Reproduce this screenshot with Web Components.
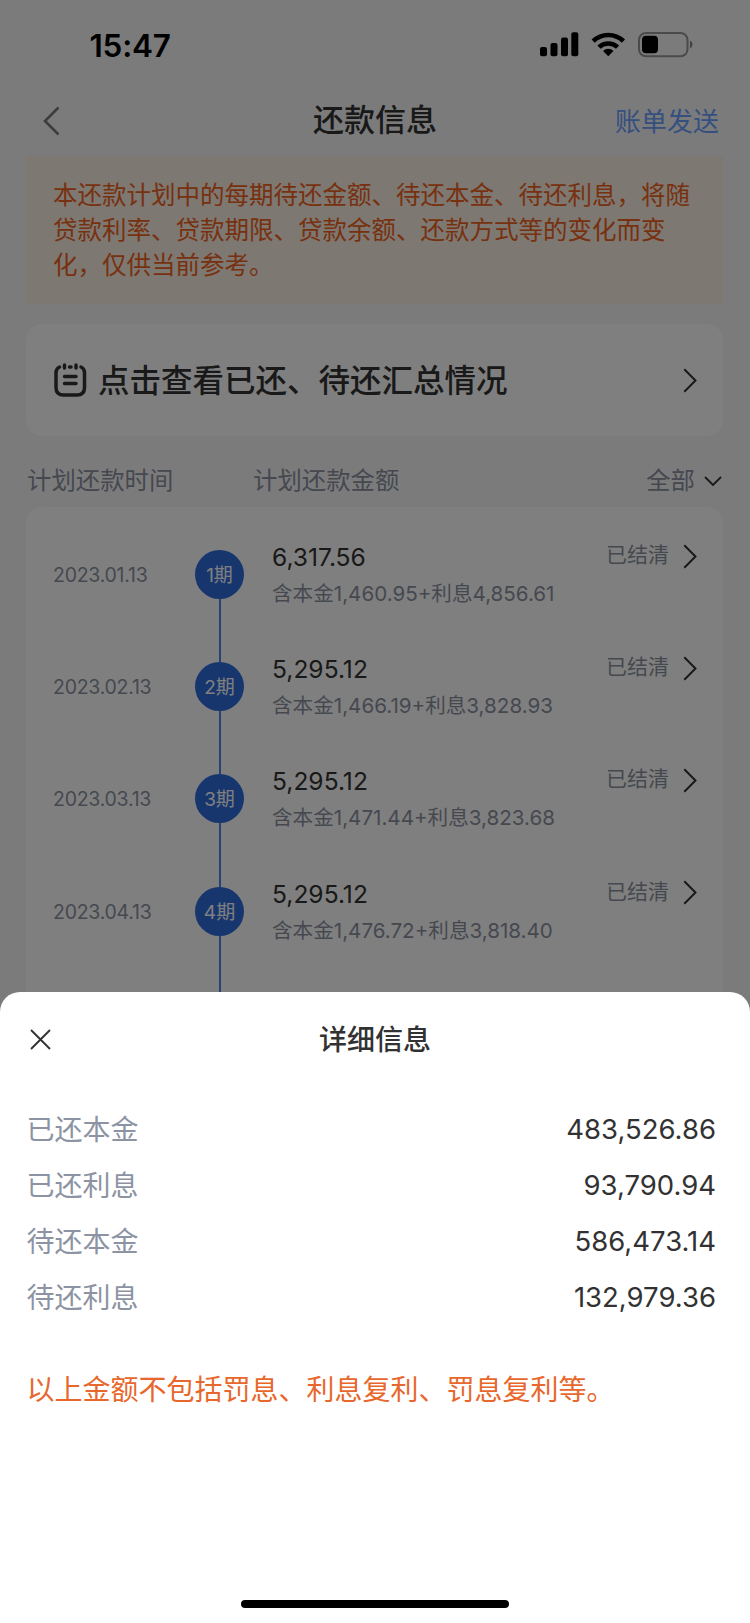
<!DOCTYPE html>
<html lang="zh-CN">
<head>
<meta charset="utf-8">
<title>还款信息</title>
<style>
html, body {
    margin: 0;
    height: 1623px;
    overflow: hidden;
    font-family: Inter, "Noto Sans CJK SC", sans-serif;
    color: #323233;
}
</style>
</head>
<body>
<repayment-app></repayment-app>

<script>
'use strict'

const INSTALLMENTS = [
    {date: '2023.01.13', amount: '6,317.56', principal: '1,460.95', interest: '4,856.61'},
    {date: '2023.02.13', amount: '5,295.12', principal: '1,466.19', interest: '3,828.93'},
    {date: '2023.03.13', amount: '5,295.12', principal: '1,471.44', interest: '3,823.68'},
    {date: '2023.04.13', amount: '5,295.12', principal: '1,476.72', interest: '3,818.40'}
];

class StatusBar extends HTMLElement {

    constructor() {
        super();

        this.attachShadow({mode: 'open'}).innerHTML = `
            <style>
            :host {
                display: flex;
                justify-content: space-between;
                align-items: center;
                height: 90px;
                padding: 0 56px 0 89.5px;
                box-sizing: border-box;
                color: #000;
            }
            .time {
                font-size: 31.5px;
                font-weight: 600;
                letter-spacing: -.2px;
            }
            svg {
                display: block;
            }
            </style>
            <span class="time"><slot></slot></span>
            <svg width="154" height="26" viewBox="540 32 154 26">
                <rect x="540" y="47" width="7" height="9.3" rx="2"/>
                <rect x="550.5" y="43" width="7" height="13.3" rx="2"/>
                <rect x="561" y="37.5" width="7" height="18.8" rx="2"/>
                <rect x="571.3" y="32.2" width="7" height="24.1" rx="2"/>
                <g fill="none" stroke="#000" stroke-width="4.6">
                    <path d="M593.2 41.2a21.6 21.6 0 0 1 30.2 0"/>
                    <path d="M599 47.2a13.4 13.4 0 0 1 18.6 0"/>
                </g>
                <path d="M608.3 56.2l-5.2-5.3a7.6 7.6 0 0 1 10.4 0z"/>
                <rect x="639" y="33" width="48.5" height="23.3" rx="7" fill="none" stroke="#000" stroke-opacity=".4" stroke-width="2"/>
                <rect x="642" y="35.8" width="16" height="17.4" rx="4"/>
                <path d="M690 40.6a4.3 4.3 0 0 1 0 7.8z" fill-opacity=".45"/>
            </svg>
        `;
    }
}

class NavBar extends HTMLElement {

    constructor() {
        super();

        this.attachShadow({mode: 'open'}).innerHTML = `
            <style>
            :host {
                display: grid;
                grid-template-columns: 1fr auto 1fr;
                align-items: center;
                height: 66px;
                padding: 0 31px 6px 43px;
                box-sizing: border-box;
            }
            svg {
                display: block;
                margin-top: 2px;
            }
            .title {
                font-size: 31px;
                line-height: 40px;
                font-weight: 500;
                padding-right: 12px;
                color: #323233;
            }
            .action {
                justify-self: end;
                margin-top: 3px;
                font-size: 26px;
                line-height: 36px;
                color: #6a9eff;
            }
            </style>
            <svg width="17" height="30" viewBox="0 0 17 30" fill="none" stroke="#7a7a7a" stroke-width="2.6">
                <path d="M15.5 1.5L2 15l13.5 13.5"/>
            </svg>
            <span class="title"><slot></slot></span>
            <span class="action"><slot name="action"></slot></span>
        `;
    }
}

class NoticeBox extends HTMLElement {

    constructor() {
        super();

        this.attachShadow({mode: 'open'}).innerHTML = `
            <style>
            :host {
                display: block;
                height: 148px;
                padding: 22px 20px 0 27px;
                box-sizing: border-box;
                background: #fdf0e4;
                color: #ee6220;
                font-size: 24.5px;
                line-height: 35px;
            }
            </style>
            <slot></slot>
        `;
    }
}

class ArrowIcon extends HTMLElement {

    constructor() {
        super();

        this.attachShadow({mode: 'open'}).innerHTML = `
            <style>
            :host {
                display: block;
                width: 14px;
                height: 25px;
            }
            svg {
                display: block;
            }
            </style>
            <svg width="14" height="25" viewBox="0 0 14 25" fill="none" stroke="#323233" stroke-width="2">
                <path d="M1.3 1.3L12.5 12.5L1.3 23.7"/>
            </svg>
        `;
    }
}

class SummaryLink extends HTMLElement {

    constructor() {
        super();

        this.attachShadow({mode: 'open'}).innerHTML = `
            <style>
            :host {
                display: flex;
                align-items: center;
                height: 112px;
                margin-top: 20px;
                padding: 0 26px 0 28px;
                box-sizing: border-box;
                border-radius: 16px;
                background: #fff;
                font-size: 31.5px;
                line-height: 42px;
                font-weight: 500;
            }
            span {
                flex: 1;
                margin: 2px 0 0 11px;
            }
            </style>
            <svg width="33" height="34" viewBox="0 0 33 34" fill="none" stroke="#323233" stroke-width="3.5" stroke-linecap="round">
                <path d="M5.5 4Q2 5.5 2 10V24.5Q2 32 9.5 32H23Q30.5 32 30.5 24.5V10Q30.5 5.5 27 4M15.5 4H17"/>
                <path d="M10.5 2V5M22 2V5M10.5 13.500H22M10.5 20.500H22"/>
            </svg>
            <span><slot></slot></span>
            <arrow-icon></arrow-icon>
        `;
    }
}

class ListHeader extends HTMLElement {

    constructor() {
        super();

        this.attachShadow({mode: 'open'}).innerHTML = `
            <style>
            :host {
                display: grid;
                grid-template-columns: 226px 1fr auto auto;
                align-items: center;
                height: 71px;
                padding: 17px 1px 0 1px;
                box-sizing: border-box;
                font-size: 24.4px;
                line-height: 34px;
                color: #8c91a0;
            }
            svg {
                margin: 2px 0 0 9px;
            }
            </style>
            <span>计划还款时间</span>
            <span>计划还款金额</span>
            <span>全部</span>
            <svg width="18" height="11" viewBox="0 0 18 11" fill="none" stroke="#323233" stroke-width="1.8">
                <path d="M1 1L9 9L17 1"/>
            </svg>
        `;
    }
}

class PlanRow extends HTMLElement {

    constructor() {
        super();
        this.attachShadow({mode: 'open'});
    }

    set item({term, date, amount, principal, interest}) {
        this.shadowRoot.innerHTML = `
            <style>
            :host {
                display: grid;
                grid-template-columns: 142px 49px 28px 1fr auto;
                height: 112.2px;
                color: #8c91a0;
            }
            .date {
                margin-top: 10px;
                font-size: 19.5px;
                line-height: 30px;
                letter-spacing: -.25px;
            }
            .rail {
                display: flex;
                flex-direction: column;
                align-items: center;
            }
            .dot {
                width: 49px;
                height: 49px;
                border-radius: 50%;
                background: #2f6ddd;
                color: #fff;
                font-size: 19px;
                line-height: 51px;
                text-align: center;
            }
            .line {
                flex: 1;
                width: 2px;
                margin-left: 1px;
                background: #4a86ea;
            }
            .detail {
                grid-column: 4;
            }
            .amount {
                margin-top: -10px;
                font-size: 24.6px;
                line-height: 34px;
                color: #323233;
            }
            .parts {
                margin-top: 5px;
                font-size: 20.6px;
                line-height: 30px;
                white-space: nowrap;
            }
            .state {
                display: flex;
                align-items: center;
                gap: 14px;
                height: 30px;
                margin-top: -9px;
                font-size: 21px;
                line-height: 30px;
            }
            .state span {
                margin-top: -2px;
            }
            </style>
            <span class="date">${date}</span>
            <div class="rail">
                <div class="dot">${term}期</div>
                <div class="line"></div>
            </div>
            <div class="detail">
                <div class="amount">${amount}</div>
                <div class="parts">含本金${principal}+利息${interest}</div>
            </div>
            <div class="state"><span>已结清</span><arrow-icon></arrow-icon></div>
        `;
    }
}

class PlanList extends HTMLElement {

    constructor() {
        super();

        const shadow = this.attachShadow({mode: 'open'});

        shadow.innerHTML = `
            <style>
            :host {
                display: block;
                height: 560px;
                padding: 43px 26px 0 27px;
                box-sizing: border-box;
                border-radius: 16px;
                background: #fff;
                overflow: hidden;
            }
            </style>
        `;

        INSTALLMENTS.forEach((installment, i) => {
            const row = document.createElement('plan-row');
            row.item = {term: i + 1, ...installment};
            shadow.appendChild(row);
        });
    }
}

class DetailRow extends HTMLElement {

    constructor() {
        super();

        this.attachShadow({mode: 'open'}).innerHTML = `
            <style>
            :host {
                display: flex;
                justify-content: space-between;
                height: 56px;
                font-size: 28px;
                line-height: 58px;
                color: #8c93a3;
            }
            .value {
                font-size: 27.5px;
                line-height: 57px;
                color: #323233;
            }
            </style>
            <span><slot></slot></span>
            <span class="value"><slot name="value"></slot></span>
        `;
    }
}

class BottomSheet extends HTMLElement {

    constructor() {
        super();

        this.attachShadow({mode: 'open'}).innerHTML = `
            <style>
            :host {
                display: flex;
                flex-direction: column;
                height: 631px;
                box-sizing: border-box;
                border-radius: 20px 20px 0 0;
                background: #fff;
            }
            header {
                display: grid;
                grid-template-columns: 1fr auto 1fr;
                align-items: center;
                height: 94px;
                padding: 0 30px;
                font-size: 28px;
                font-weight: 500;
            }
            .title {
                margin-top: -3px;
            }
            .rows {
                padding: 15px 34px 0 26.5px;
            }
            .warning {
                margin: 37px 26.5px 0;
                font-size: 28px;
                line-height: 56px;
                color: #e8672c;
            }
            .home {
                width: 268px;
                height: 8px;
                margin: auto auto 15px;
                border-radius: 4px;
                background: #000;
            }
            </style>
            <header>
                <svg width="21" height="21" viewBox="0 0 21 21" stroke="#323233" stroke-width="1.9">
                    <path d="M1 1L20 20M20 1L1 20"/>
                </svg>
                <div class="title"><slot name="title"></slot></div>
            </header>
            <div class="rows"><slot></slot></div>
            <div class="warning"><slot name="warning"></slot></div>
            <div class="home"></div>
        `;
    }
}

class RepaymentApp extends HTMLElement {

    constructor() {
        super();

        this.attachShadow({mode: 'open'}).innerHTML = `
            <style>
            :host {
                display: block;
                position: relative;
                height: 1623px;
                overflow: hidden;
                background: #f7f7f8;
            }
            main {
                padding: 0 27px 0 26px;
            }
            .backdrop {
                position: absolute;
                inset: 0;
                display: flex;
                flex-direction: column;
                justify-content: flex-end;
                background: rgba(0, 0, 0, .5);
            }
            </style>
            <status-bar>15:47</status-bar>
            <nav-bar>还款信息<span slot="action">账单发送</span></nav-bar>
            <main>
                <notice-box>本还款计划中的每期待还金额、待还本金、待还利息，将随贷款利率、贷款期限、贷款余额、还款方式等的变化而变化，仅供当前参考。</notice-box>
                <summary-link>点击查看已还、待还汇总情况</summary-link>
                <list-header></list-header>
                <plan-list></plan-list>
            </main>
            <div class="backdrop">
                <bottom-sheet>
                    <span slot="title">详细信息</span>
                    <detail-row>已还本金<span slot="value">483,526.86</span></detail-row>
                    <detail-row>已还利息<span slot="value">93,790.94</span></detail-row>
                    <detail-row>待还本金<span slot="value">586,473.14</span></detail-row>
                    <detail-row>待还利息<span slot="value">132,979.36</span></detail-row>
                    <span slot="warning">以上金额不包括罚息、利息复利、罚息复利等。</span>
                </bottom-sheet>
            </div>
        `;
    }
}

customElements.define('arrow-icon', ArrowIcon);
customElements.define('status-bar', StatusBar);
customElements.define('nav-bar', NavBar);
customElements.define('notice-box', NoticeBox);
customElements.define('summary-link', SummaryLink);
customElements.define('list-header', ListHeader);
customElements.define('plan-row', PlanRow);
customElements.define('plan-list', PlanList);
customElements.define('detail-row', DetailRow);
customElements.define('bottom-sheet', BottomSheet);
customElements.define('repayment-app', RepaymentApp);
</script>
</body>
</html>
